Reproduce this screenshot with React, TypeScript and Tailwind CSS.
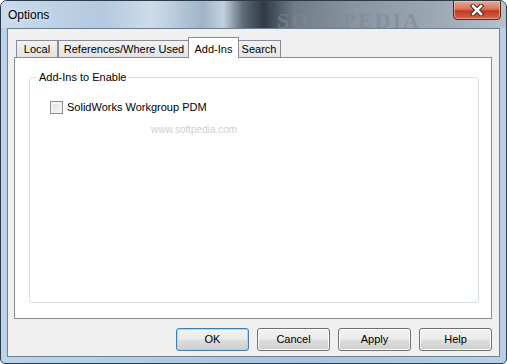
import React from "react";

const tabs = [
  { label: "Local", w: "w-[42px]" },
  { label: "References/Where Used", w: "w-[132px]" },
  { label: "Add-Ins", w: "w-[51px]", active: true },
  { label: "Search", w: "w-[44px]" },
];

function WinButton({ label, focused }: { label: string; focused?: boolean }) {
  return (
    <button
      className={
        "h-[23px] w-[73px] rounded-[3px] border text-[11px] text-black " +
        (focused
          ? "border-[#3c7fb1] shadow-[inset_0_0_0_1px_#9fdcf8]"
          : "border-[#707070] shadow-[inset_0_0_0_1px_#fcfcfc]") +
        " bg-[linear-gradient(to_bottom,#f2f2f2_0%,#ebebeb_48%,#dddddd_52%,#cfcfcf_100%)]"
      }
    >
      {label}
    </button>
  );
}

export default function App() {
  return (
    <div
      className="relative flex h-[364px] w-[507px] flex-col overflow-hidden rounded-t-[7px] rounded-b-[5px] border border-[#2d3a48] bg-[linear-gradient(to_right,#bcd3ea_0%,#a9c4df_60%,#b8cfe7_100%)]"
      style={{ fontFamily: '"Liberation Sans", Arial, sans-serif' }}
    >
      {/* title bar */}
      <div className="relative flex h-[27px] shrink-0 items-center bg-[linear-gradient(to_right,#c9dcee_0%,#b3c9df_20%,#cddcea_30%,#9fb4c9_40%,#c2d1df_44%,#5d6a76_48%,#2f3a44_52%,#6f7c88_58%,#8996a2_70%,#9aa6b1_85%,#b3c1cd_100%)]">
        <span className="pl-[7px] text-[12px] text-black [text-shadow:0_0_6px_#ffffff]">Options</span>
        <span className="absolute left-[276px] top-[3px] text-[22px] font-bold tracking-[2px] text-[#7d8995]/60" style={{ fontFamily: '"Liberation Serif", serif' }}>
          SOFTPEDIA
        </span>
        <div className="absolute right-[5px] top-[-1px] flex h-[20px] w-[48px] items-center justify-center rounded-b-[4px] border border-[#4e2a22] bg-[linear-gradient(to_bottom,#e9a897_0%,#d6735e_45%,#c2381d_55%,#d8664a_100%)] shadow-[inset_0_0_0_1px_rgba(255,210,200,0.5)]">
          <svg width="14" height="12" viewBox="0 0 14 12">
            <path d="M3 2 L11 10 M11 2 L3 10" stroke="#3b2420" strokeWidth="4.5" strokeLinecap="square" />
            <path d="M3 2 L11 10 M11 2 L3 10" stroke="#ffffff" strokeWidth="2.6" strokeLinecap="square" />
          </svg>
        </div>
      </div>

      {/* client area */}
      <div className="mx-[6px] flex h-[329px] flex-col border border-[#6e7f90] bg-[#f0f0f0] pl-[6px] pr-[7px] pt-[8px]">
        <div className="flex items-end pl-[2px]">
          {tabs.map((t) =>
            t.active ? (
              <div
                key={t.label}
                className={`relative z-10 -mx-[2px] -mb-px flex h-[21px] items-start justify-center whitespace-nowrap border border-b-0 border-[#898c95] bg-white pt-[3px] text-[11px] text-black ${t.w}`}
              >
                {t.label}
              </div>
            ) : (
              <div
                key={t.label}
                className={`flex h-[17px] items-center justify-center whitespace-nowrap border border-b-0 border-[#898c95] bg-[linear-gradient(to_bottom,#f2f2f2,#e3e3e3)] text-[11px] text-black ${t.w}`}
              >
                {t.label}
              </div>
            )
          )}
        </div>

        <div className="relative flex h-[262px] flex-col border border-[#898c95] bg-white pb-[15px] pl-[14px] pr-[12px] pt-[12px]">
          <fieldset className="flex-1 rounded-[3px] border border-[#d5dfe5] pl-[20px] pt-[15px]">
            <legend className="-ml-[13px] px-[2px] text-[11px] leading-[14px] text-black">Add-Ins to Enable</legend>
            <label className="flex items-center gap-[4px] text-[11px] text-black">
              <span className="h-[13px] w-[13px] border border-[#8f8f8f] bg-[linear-gradient(135deg,#dcdcdc,#f8f8f8)] shadow-[inset_0_0_0_2px_#f4f4f4]" />
              SolidWorks Workgroup PDM
            </label>
          </fieldset>
          <span className="pointer-events-none absolute left-[136px] top-[64px] text-[10px] text-[#d0d0d0]">www.softpedia.com</span>
        </div>

        <div className="mt-[9px] flex justify-end gap-[8px]">
          <WinButton label="OK" focused />
          <WinButton label="Cancel" />
          <WinButton label="Apply" />
          <WinButton label="Help" />
        </div>
      </div>
    </div>
  );
}
